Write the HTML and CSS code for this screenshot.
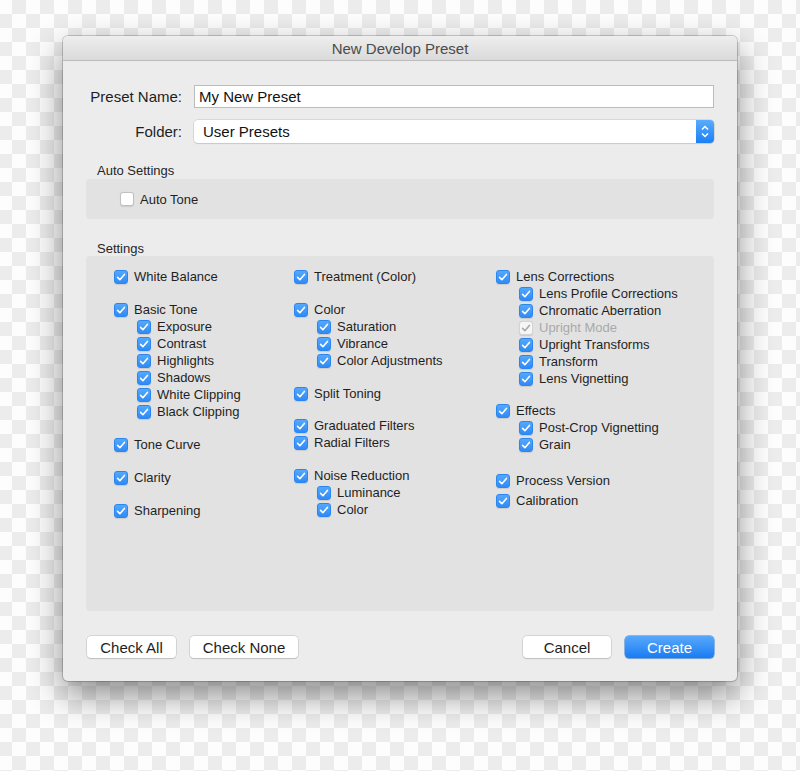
FILE: index.html
```html
<!DOCTYPE html>
<html lang="en">
<head>
    <meta charset="utf-8">
    <title>New Develop Preset</title>
    <link rel="stylesheet" href="styles.css">
</head>
<body>
<div class="dialog">
    <div class="titlebar">New Develop Preset</div>
    <div class="content">
        <div class="form-row">
            <label class="form-label">Preset Name:</label>
            <div class="text-field">My New Preset</div>
        </div>
        <div class="form-row">
            <label class="form-label">Folder:</label>
            <div class="select">
                <span class="select-value">User Presets</span>
                <span class="select-arrows">
                    <svg viewBox="0 0 18 23" width="18" height="23">
                        <path d="M6 9.5l3-3 3 3M6 13.5l3 3 3-3"/>
                    </svg>
                </span>
            </div>
        </div>

        <div class="group-title first">Auto Settings</div>
        <div class="group auto">
            <div class="item"><span class="cb"></span>Auto Tone</div>
        </div>

        <div class="group-title">Settings</div>
        <div class="group settings">
            <div class="col">
                <div class="block">
                    <div class="item"><span class="cb on"><svg viewBox="0 0 14 14"><path d="M3.6 7.4l2.3 2.3 4.5-5.3"/></svg></span>White Balance</div>
                </div>
                <div class="block">
                    <div class="item"><span class="cb on"><svg viewBox="0 0 14 14"><path d="M3.6 7.4l2.3 2.3 4.5-5.3"/></svg></span>Basic Tone</div>
                    <div class="item sub"><span class="cb on"><svg viewBox="0 0 14 14"><path d="M3.6 7.4l2.3 2.3 4.5-5.3"/></svg></span>Exposure</div>
                    <div class="item sub"><span class="cb on"><svg viewBox="0 0 14 14"><path d="M3.6 7.4l2.3 2.3 4.5-5.3"/></svg></span>Contrast</div>
                    <div class="item sub"><span class="cb on"><svg viewBox="0 0 14 14"><path d="M3.6 7.4l2.3 2.3 4.5-5.3"/></svg></span>Highlights</div>
                    <div class="item sub"><span class="cb on"><svg viewBox="0 0 14 14"><path d="M3.6 7.4l2.3 2.3 4.5-5.3"/></svg></span>Shadows</div>
                    <div class="item sub"><span class="cb on"><svg viewBox="0 0 14 14"><path d="M3.6 7.4l2.3 2.3 4.5-5.3"/></svg></span>White Clipping</div>
                    <div class="item sub"><span class="cb on"><svg viewBox="0 0 14 14"><path d="M3.6 7.4l2.3 2.3 4.5-5.3"/></svg></span>Black Clipping</div>
                </div>
                <div class="block">
                    <div class="item"><span class="cb on"><svg viewBox="0 0 14 14"><path d="M3.6 7.4l2.3 2.3 4.5-5.3"/></svg></span>Tone Curve</div>
                </div>
                <div class="block">
                    <div class="item"><span class="cb on"><svg viewBox="0 0 14 14"><path d="M3.6 7.4l2.3 2.3 4.5-5.3"/></svg></span>Clarity</div>
                </div>
                <div class="block">
                    <div class="item"><span class="cb on"><svg viewBox="0 0 14 14"><path d="M3.6 7.4l2.3 2.3 4.5-5.3"/></svg></span>Sharpening</div>
                </div>
            </div>

            <div class="col">
                <div class="block">
                    <div class="item"><span class="cb on"><svg viewBox="0 0 14 14"><path d="M3.6 7.4l2.3 2.3 4.5-5.3"/></svg></span>Treatment (Color)</div>
                </div>
                <div class="block">
                    <div class="item"><span class="cb on"><svg viewBox="0 0 14 14"><path d="M3.6 7.4l2.3 2.3 4.5-5.3"/></svg></span>Color</div>
                    <div class="item sub"><span class="cb on"><svg viewBox="0 0 14 14"><path d="M3.6 7.4l2.3 2.3 4.5-5.3"/></svg></span>Saturation</div>
                    <div class="item sub"><span class="cb on"><svg viewBox="0 0 14 14"><path d="M3.6 7.4l2.3 2.3 4.5-5.3"/></svg></span>Vibrance</div>
                    <div class="item sub"><span class="cb on"><svg viewBox="0 0 14 14"><path d="M3.6 7.4l2.3 2.3 4.5-5.3"/></svg></span>Color Adjustments</div>
                </div>
                <div class="block tight">
                    <div class="item"><span class="cb on"><svg viewBox="0 0 14 14"><path d="M3.6 7.4l2.3 2.3 4.5-5.3"/></svg></span>Split Toning</div>
                </div>
                <div class="block">
                    <div class="item"><span class="cb on"><svg viewBox="0 0 14 14"><path d="M3.6 7.4l2.3 2.3 4.5-5.3"/></svg></span>Graduated Filters</div>
                    <div class="item"><span class="cb on"><svg viewBox="0 0 14 14"><path d="M3.6 7.4l2.3 2.3 4.5-5.3"/></svg></span>Radial Filters</div>
                </div>
                <div class="block">
                    <div class="item"><span class="cb on"><svg viewBox="0 0 14 14"><path d="M3.6 7.4l2.3 2.3 4.5-5.3"/></svg></span>Noise Reduction</div>
                    <div class="item sub"><span class="cb on"><svg viewBox="0 0 14 14"><path d="M3.6 7.4l2.3 2.3 4.5-5.3"/></svg></span>Luminance</div>
                    <div class="item sub"><span class="cb on"><svg viewBox="0 0 14 14"><path d="M3.6 7.4l2.3 2.3 4.5-5.3"/></svg></span>Color</div>
                </div>
            </div>

            <div class="col">
                <div class="block tight">
                    <div class="item"><span class="cb on"><svg viewBox="0 0 14 14"><path d="M3.6 7.4l2.3 2.3 4.5-5.3"/></svg></span>Lens Corrections</div>
                    <div class="item sub"><span class="cb on"><svg viewBox="0 0 14 14"><path d="M3.6 7.4l2.3 2.3 4.5-5.3"/></svg></span>Lens Profile Corrections</div>
                    <div class="item sub"><span class="cb on"><svg viewBox="0 0 14 14"><path d="M3.6 7.4l2.3 2.3 4.5-5.3"/></svg></span>Chromatic Aberration</div>
                    <div class="item sub disabled"><span class="cb off-check"><svg viewBox="0 0 14 14"><path d="M3.6 7.4l2.3 2.3 4.5-5.3"/></svg></span>Upright Mode</div>
                    <div class="item sub"><span class="cb on"><svg viewBox="0 0 14 14"><path d="M3.6 7.4l2.3 2.3 4.5-5.3"/></svg></span>Upright Transforms</div>
                    <div class="item sub"><span class="cb on"><svg viewBox="0 0 14 14"><path d="M3.6 7.4l2.3 2.3 4.5-5.3"/></svg></span>Transform</div>
                    <div class="item sub"><span class="cb on"><svg viewBox="0 0 14 14"><path d="M3.6 7.4l2.3 2.3 4.5-5.3"/></svg></span>Lens Vignetting</div>
                </div>
                <div class="block wide">
                    <div class="item"><span class="cb on"><svg viewBox="0 0 14 14"><path d="M3.6 7.4l2.3 2.3 4.5-5.3"/></svg></span>Effects</div>
                    <div class="item sub"><span class="cb on"><svg viewBox="0 0 14 14"><path d="M3.6 7.4l2.3 2.3 4.5-5.3"/></svg></span>Post-Crop Vignetting</div>
                    <div class="item sub"><span class="cb on"><svg viewBox="0 0 14 14"><path d="M3.6 7.4l2.3 2.3 4.5-5.3"/></svg></span>Grain</div>
                </div>
                <div class="block">
                    <div class="item"><span class="cb on"><svg viewBox="0 0 14 14"><path d="M3.6 7.4l2.3 2.3 4.5-5.3"/></svg></span>Process Version</div>
                    <div class="item spaced"><span class="cb on"><svg viewBox="0 0 14 14"><path d="M3.6 7.4l2.3 2.3 4.5-5.3"/></svg></span>Calibration</div>
                </div>
            </div>
        </div>

        <div class="buttons">
            <button class="btn check-all">Check All</button>
            <button class="btn check-none">Check None</button>
            <span class="spacer"></span>
            <button class="btn cancel">Cancel</button>
            <button class="btn primary">Create</button>
        </div>
    </div>
</div>
</body>
</html>
```

FILE: styles.css
```css
html, body {
    margin: 0;
    height: 100%;
}

body {
    padding: 36px 63px 0;
    box-sizing: border-box;
    font-family: "Liberation Sans", Arial, sans-serif;
    color: #222;
    background-color: #fdfdfd;
    background-image: conic-gradient(#ececec 25%, #fdfdfd 0 50%, #ececec 0 75%, #fdfdfd 0);
    background-size: 28px 28px;
    background-position: -2px 0;
}

.dialog {
    width: 674px;
    height: 645px;
    background: #ececec;
    border-radius: 5px;
    box-shadow: 0 0 0 1px rgba(0, 0, 0, 0.18), 0 14px 34px rgba(0, 0, 0, 0.45);
    display: flex;
    flex-direction: column;
    overflow: hidden;
}

.titlebar {
    height: 24px;
    line-height: 25px;
    text-align: center;
    font-size: 15px;
    color: #4b4b4b;
    background: linear-gradient(#eeeeee, #dadada);
    border-bottom: 1px solid #bcbcbc;
}

.content {
    flex: 1;
    display: flex;
    flex-direction: column;
    padding: 24px 23px 23px 23px;
}

.form-row {
    display: flex;
    align-items: center;
    height: 23px;
    margin-bottom: 12px;
}

.form-row:nth-child(2) {
    margin-bottom: 0;
}

.form-label {
    width: 96px;
    text-align: right;
    font-size: 15px;
    color: #1e1e1e;
    margin-right: 12px;
}

.text-field {
    flex: 1;
    height: 21px;
    line-height: 21px;
    padding: 0 4px;
    background: #fff;
    border: 1px solid #bcbcbc;
    font-size: 15px;
    color: #111;
}

.select {
    flex: 1;
    height: 23px;
    display: flex;
    background: #fff;
    border-radius: 4px;
    box-shadow: 0 0 0 0.5px #c4c4c4, 0 1px 1px rgba(0, 0, 0, 0.12);
}

.select-value {
    flex: 1;
    line-height: 23px;
    padding-left: 9px;
    font-size: 15px;
    color: #111;
}

.select-arrows {
    width: 18px;
    border-radius: 0 4px 4px 0;
    background: linear-gradient(#5aacfd, #1b7ff4);
}

.select-arrows svg {
    display: block;
}

.select-arrows path {
    fill: none;
    stroke: #fff;
    stroke-width: 1.5;
}

.group-title {
    font-size: 13px;
    color: #262626;
    height: 15px;
    line-height: 15px;
    margin: 22px 0 0 11px;
}

.group-title.first {
    margin-top: 20px;
}

.group {
    background: #e2e2e2;
    border-radius: 4px;
}

.auto {
    height: 40px;
    display: flex;
    align-items: center;
    padding-left: 34px;
    margin-top: 1px;
}

.settings {
    flex: 1;
    display: grid;
    grid-template-columns: 180px 202px 1fr;
    padding: 12px 0 0 28px;
    align-content: start;
}

.block {
    margin-bottom: 16px;
}

.block.tight {
    margin-bottom: 15px;
}

.block.wide {
    margin-bottom: 19px;
}

.item {
    display: flex;
    align-items: center;
    height: 17px;
    font-size: 13px;
    color: #1f1f1f;
    white-space: nowrap;
}

.item.sub {
    padding-left: 23px;
}

.item.spaced {
    margin-top: 3px;
}

.item.disabled {
    color: #a9a9a9;
}

.cb {
    width: 12px;
    height: 12px;
    flex: none;
    margin-right: 6px;
    border-radius: 3px;
    background: #fff;
    border: 1px solid #c0c0c0;
    box-shadow: 0 0.5px 1px rgba(0, 0, 0, 0.1);
}

.cb svg {
    display: block;
    width: 14px;
    height: 14px;
    margin: -1px 0 0 -1px;
}

.cb path {
    fill: none;
    stroke: #fff;
    stroke-width: 1.6;
    stroke-linecap: round;
    stroke-linejoin: round;
}

.cb.on {
    background: linear-gradient(#54a9fd, #2f8af5);
    border-color: #2c86ef;
}

.cb.off-check {
    background: #f6f6f6;
    border-color: #d4d4d4;
}

.cb.off-check path {
    stroke: #a8a8a8;
}

.buttons {
    display: flex;
    align-items: center;
    margin-top: 25px;
    gap: 13px;
}

.spacer {
    flex: 1;
}

.btn {
    height: 22px;
    padding: 0;
    font-family: "Liberation Sans", Arial, sans-serif;
    font-size: 15px;
    color: #1d1d1d;
    background: #fff;
    border: none;
    border-radius: 4px;
    box-shadow: 0 0 0 0.5px #bdbdbd, 0 1px 1px rgba(0, 0, 0, 0.18);
    margin-left: 1px;
}

.check-all {
    width: 89px;
}

.check-none {
    width: 108px;
}

.cancel {
    width: 88px;
}

.primary {
    width: 89px;
    color: #fff;
    background: linear-gradient(#58a8fb, #1a7cf3);
    box-shadow: 0 0 0 0.5px #2a7fe6, 0 1px 1px rgba(0, 0, 0, 0.18);
}
```
